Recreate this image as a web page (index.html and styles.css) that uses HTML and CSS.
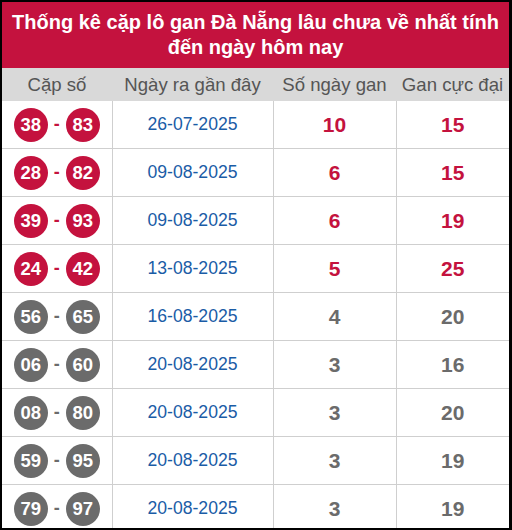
FILE: index.html
```html
<!DOCTYPE html>
<html lang="vi">
<head>
<meta charset="utf-8">
<title>Thống kê cặp lô gan Đà Nẵng</title>
<link rel="stylesheet" href="styles.css">
</head>
<body>
<div class="frame">
  <div class="title">Thống kê cặp lô gan Đà Nẵng lâu chưa về nhất tính đến ngày hôm nay</div>
  <table class="stats">
    <colgroup>
      <col class="c1"><col class="c2"><col class="c3"><col class="c4">
    </colgroup>
    <thead>
      <tr><th>Cặp số</th><th>Ngày ra gần đây</th><th>Số ngày gan</th><th>Gan cực đại</th></tr>
    </thead>
    <tbody>
      <tr class="hot"><td><span class="pair"><span class="ball">38</span><span class="dash">-</span><span class="ball">83</span></span></td><td class="date">26-07-2025</td><td class="num">10</td><td class="num">15</td></tr>
      <tr class="hot"><td><span class="pair"><span class="ball">28</span><span class="dash">-</span><span class="ball">82</span></span></td><td class="date">09-08-2025</td><td class="num">6</td><td class="num">15</td></tr>
      <tr class="hot"><td><span class="pair"><span class="ball">39</span><span class="dash">-</span><span class="ball">93</span></span></td><td class="date">09-08-2025</td><td class="num">6</td><td class="num">19</td></tr>
      <tr class="hot"><td><span class="pair"><span class="ball">24</span><span class="dash">-</span><span class="ball">42</span></span></td><td class="date">13-08-2025</td><td class="num">5</td><td class="num">25</td></tr>
      <tr class="cold"><td><span class="pair"><span class="ball">56</span><span class="dash">-</span><span class="ball">65</span></span></td><td class="date">16-08-2025</td><td class="num">4</td><td class="num">20</td></tr>
      <tr class="cold"><td><span class="pair"><span class="ball">06</span><span class="dash">-</span><span class="ball">60</span></span></td><td class="date">20-08-2025</td><td class="num">3</td><td class="num">16</td></tr>
      <tr class="cold"><td><span class="pair"><span class="ball">08</span><span class="dash">-</span><span class="ball">80</span></span></td><td class="date">20-08-2025</td><td class="num">3</td><td class="num">20</td></tr>
      <tr class="cold"><td><span class="pair"><span class="ball">59</span><span class="dash">-</span><span class="ball">95</span></span></td><td class="date">20-08-2025</td><td class="num">3</td><td class="num">19</td></tr>
      <tr class="cold"><td><span class="pair"><span class="ball">79</span><span class="dash">-</span><span class="ball">97</span></span></td><td class="date">20-08-2025</td><td class="num">3</td><td class="num">19</td></tr>
    </tbody>
  </table>
</div>
</body>
</html>
```
FILE: styles.css
```css
html, body {
  margin: 0;
  padding: 0;
  background: #000;
}
body {
  font-family: "Liberation Sans", Arial, sans-serif;
  width: 512px;
  height: 530px;
  overflow: hidden;
}
.frame {
  width: 507px;
  height: 526px;
  margin: 2px 3px 2px 2px;
  background: #fff;
  overflow: hidden;
}
.title {
  background: #c4123e;
  color: #fff;
  font-weight: bold;
  font-size: 20px;
  line-height: 25px;
  text-align: center;
  padding: 8px 8px;
}
.stats {
  width: 507px;
  border-collapse: collapse;
  table-layout: fixed;
}
.c1 { width: 110px; }
.c2 { width: 161px; }
.c3 { width: 123px; }
.c4 { width: 113px; }
.stats th {
  background: #d9d9d9;
  color: #555;
  font-weight: normal;
  font-size: 18.6px;
  height: 33px;
  padding: 0;
  text-align: center;
  white-space: nowrap;
}
.stats td {
  height: 47px;
  padding: 0;
  border: 1px solid #cfcfcf;
  text-align: center;
}
.stats tr td:first-child { border-left: none; }
.stats tr td:last-child { border-right: none; }
.stats tbody tr:first-child td { border-top: none; }
.pair {
  display: inline-flex;
  align-items: center;
  vertical-align: middle;
}
.ball {
  width: 34px;
  height: 34px;
  border-radius: 50%;
  color: #fff;
  font-weight: bold;
  font-size: 18.5px;
  display: flex;
  align-items: center;
  justify-content: center;
}
.hot .ball { background: #c4123e; }
.cold .ball { background: #6b6b6b; }
.dash {
  font-size: 18px;
  font-weight: bold;
  margin: 0 6px;
}
.hot .dash { color: #c4123e; }
.cold .dash { color: #6b6b6b; }
.date {
  color: #1a5ca6;
  font-size: 17.6px;
}
.num {
  font-weight: bold;
  font-size: 21px;
}
.hot .num { color: #c4123e; }
.cold .num { color: #6b6b6b; }
```
